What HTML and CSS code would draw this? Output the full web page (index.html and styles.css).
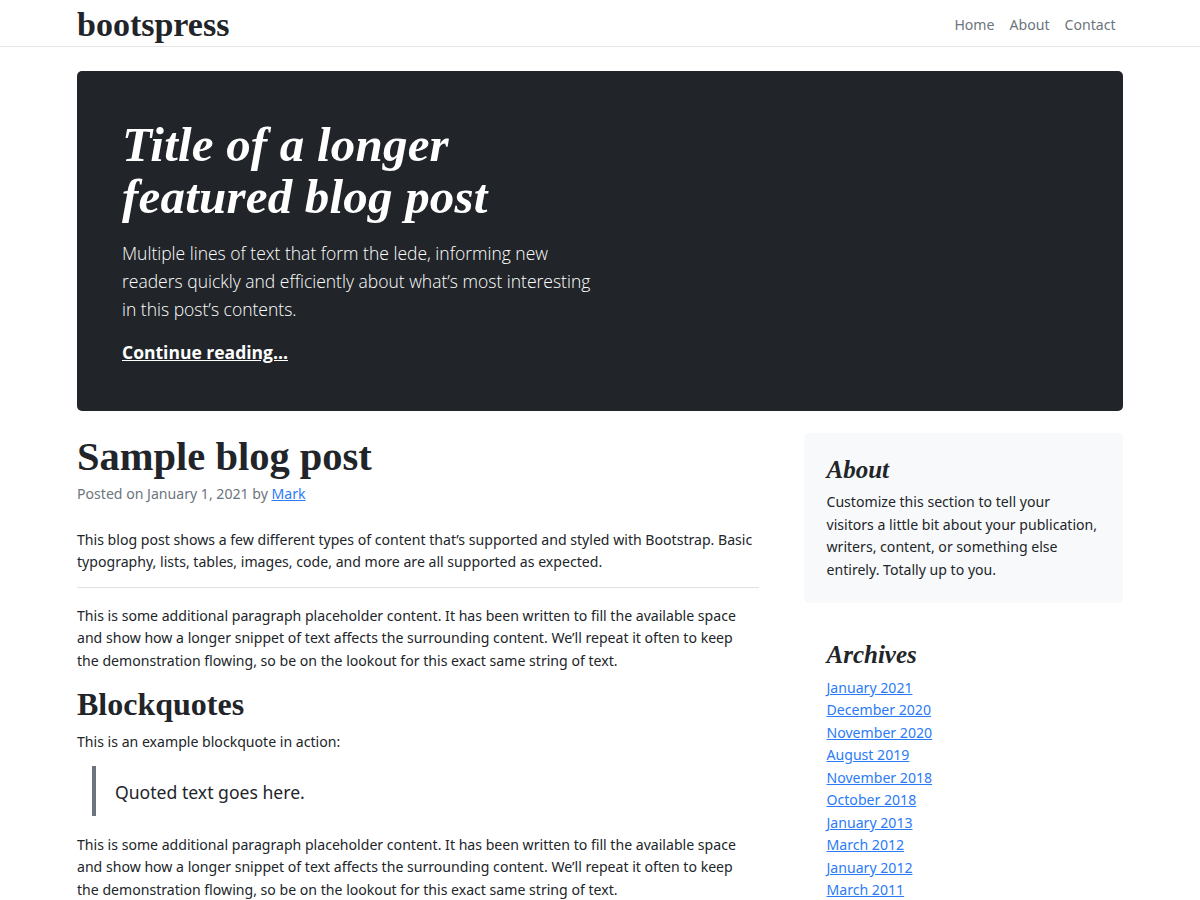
FILE: index.html
```html
<!DOCTYPE html>
<html lang="en">
<head>
<meta charset="utf-8">
<title>bootspress</title>
<link rel="stylesheet" href="styles.css">
</head>
<body>
<header class="site-header">
  <div class="container header-inner">
    <a class="brand" href="#">bootspress</a>
    <nav class="nav">
      <a class="nav-link" href="#">Home</a>
      <a class="nav-link" href="#">About</a>
      <a class="nav-link" href="#">Contact</a>
    </nav>
  </div>
</header>

<main class="container">
  <section class="hero">
    <div class="hero-inner">
      <h1 class="hero-title">Title of a longer featured blog post</h1>
      <p class="lead">Multiple lines of text that form the lede, informing new readers quickly and efficiently about what’s most interesting in this post’s contents.</p>
      <p class="lead lead-last"><a class="hero-link" href="#">Continue reading...</a></p>
    </div>
  </section>

  <div class="row">
    <article class="post">
      <h2 class="post-title">Sample blog post</h2>
      <p class="post-meta">Posted on January 1, 2021 by <a href="#">Mark</a></p>
      <p>This blog post shows a few different types of content that’s supported and styled with Bootstrap. Basic typography, lists, tables, images, code, and more are all supported as expected.</p>
      <hr class="divider">
      <p>This is some additional paragraph placeholder content. It has been written to fill the available space and show how a longer snippet of text affects the surrounding content. We’ll repeat it often to keep the demonstration flowing, so be on the lookout for this exact same string of text.</p>
      <h2 class="section-title">Blockquotes</h2>
      <p class="quote-intro">This is an example blockquote in action:</p>
      <blockquote class="quote"><p>Quoted text goes here.</p></blockquote>
      <p>This is some additional paragraph placeholder content. It has been written to fill the available space and show how a longer snippet of text affects the surrounding content. We’ll repeat it often to keep the demonstration flowing, so be on the lookout for this exact same string of text.</p>
    </article>

    <aside class="sidebar">
      <div class="about-box">
        <h4 class="side-title">About</h4>
        <p class="about-text">Customize this section to tell your visitors a little bit about your publication, writers, content, or something else entirely. Totally up to you.</p>
      </div>
      <div class="archives">
        <h4 class="side-title">Archives</h4>
        <ol class="archive-list">
          <li><a href="#">January 2021</a></li>
          <li><a href="#">December 2020</a></li>
          <li><a href="#">November 2020</a></li>
          <li><a href="#">August 2019</a></li>
          <li><a href="#">November 2018</a></li>
          <li><a href="#">October 2018</a></li>
          <li><a href="#">January 2013</a></li>
          <li><a href="#">March 2012</a></li>
          <li><a href="#">January 2012</a></li>
          <li><a href="#">March 2011</a></li>
        </ol>
      </div>
    </aside>
  </div>
</main>
</body>
</html>
```

FILE: styles.css
```css
* { box-sizing: border-box; }

html, body {
  margin: 0;
  padding: 0;
  background: #fff;
}

body {
  font-family: "Noto Sans", "Open Sans", sans-serif;
  font-size: 14.1px;
  line-height: 22.5px;
  color: #212529;
}

a { color: #2b7bf7; }

p { margin: 0 0 15px; }

.container {
  width: 1046px;
  margin: 0 auto;
}

/* header */
.site-header {
  border-bottom: 1px solid #e5e5e5;
  height: 47px;
}

.header-inner {
  height: 46px;
  display: flex;
  align-items: center;
  justify-content: space-between;
}

.brand {
  font-family: "Liberation Serif", serif;
  font-weight: 700;
  font-size: 34px;
  line-height: 39px;
  padding-top: 3px;
  color: #212529;
  text-decoration: none;
}

.nav {
  display: flex;
  padding-top: 4px;
}

.nav-link {
  color: #6c757d;
  text-decoration: none;
  padding: 0 7.5px;
}

/* hero */
.hero {
  margin-top: 24px;
  background: #212529;
  color: #fff;
  border-radius: 5px;
  padding: 48px 45px 45px;
  margin-bottom: 22px;
}

.hero-inner {
  width: 470px;
}

.hero-title {
  font-family: "Liberation Serif", serif;
  font-style: italic;
  font-weight: 700;
  font-size: 49px;
  line-height: 52px;
  margin: 0 0 16px;
  letter-spacing: 0.2px;
}

.lead {
  font-family: "Open Sans", "Noto Sans", sans-serif;
  font-size: 17.5px;
  line-height: 28px;
  font-weight: 300;
}

.lead-last { margin-bottom: 0; }

.hero-link {
  color: #fff;
  font-weight: 700;
}

/* main row */
.row {
  display: flex;
  gap: 45px;
}

.post {
  width: 682px;
}

.post p {
  padding-right: 3px;
}

.post-title {
  font-family: "Liberation Serif", serif;
  font-weight: 700;
  font-size: 40.5px;
  line-height: 48px;
  margin: 0;
}

.post-meta {
  color: #6c757d;
  margin-top: 2px;
  margin-bottom: 23px;
}

.divider {
  border: 0;
  border-top: 1px solid #dee2e6;
  margin: -2px 0 17px;
}

.section-title {
  font-family: "Liberation Serif", serif;
  font-weight: 700;
  font-size: 32px;
  line-height: 38px;
  margin: -2px 0 8px;
}

.post .quote-intro { margin-bottom: 12px; }

.quote {
  margin: 0 0 18px 15px;
  padding: 12px 0 10px 19px;
  border-left: 4px solid #6c757d;
  font-size: 17.6px;
  line-height: 28px;
}

.post .quote p { margin: 0; padding: 0; }

/* sidebar */
.sidebar {
  width: 319px;
}

.about-box {
  background: #f8f9fa;
  border-radius: 5px;
  padding: 22px 22.5px 21.5px;
  margin-bottom: 15px;
}

.side-title {
  font-family: "Liberation Serif", serif;
  font-style: italic;
  font-weight: 700;
  font-size: 25px;
  line-height: 30px;
  margin: 0 0 6px;
}

.about-text { margin: 0; }

.archives {
  padding: 22px 22.5px;
}

.archives .side-title { margin-bottom: 7px; }

.archive-list {
  list-style: none;
  margin: 0;
  padding: 0;
}
```
